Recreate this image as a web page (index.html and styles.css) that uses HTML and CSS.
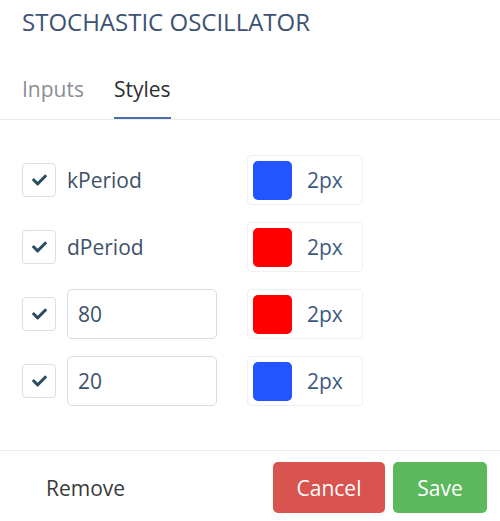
FILE: index.html
```html
<!DOCTYPE html>
<html>
<head>
<meta charset="utf-8">
<link rel="stylesheet" href="styles.css">
</head>
<body>
<div class="dialog">
  <h1 class="title">STOCHASTIC OSCILLATOR</h1>
  <div class="tabs">
    <div class="tab">Inputs</div>
    <div class="tab active">Styles</div>
  </div>
  <div class="rows">
    <div class="row">
      <div class="left">
        <span class="check"><svg viewBox="0 60 512 390" width="15" height="12"><path d="M173.898 439.404l-166.4-166.4c-9.997-9.997-9.997-26.206 0-36.204l36.203-36.204c9.997-9.998 26.207-9.998 36.204 0L192 312.69 432.095 72.596c9.997-9.997 26.207-9.997 36.204 0l36.203 36.204c9.997 9.997 9.997 26.206 0 36.204l-294.4 294.401c-9.998 9.997-26.207 9.997-36.204-.001z"/></svg></span>
        <span class="label">kPeriod</span>
      </div>
      <div class="style"><span class="swatch blue"></span><span class="px">2px</span></div>
    </div>
    <div class="row">
      <div class="left">
        <span class="check"><svg viewBox="0 60 512 390" width="15" height="12"><path d="M173.898 439.404l-166.4-166.4c-9.997-9.997-9.997-26.206 0-36.204l36.203-36.204c9.997-9.998 26.207-9.998 36.204 0L192 312.69 432.095 72.596c9.997-9.997 26.207-9.997 36.204 0l36.203 36.204c9.997 9.997 9.997 26.206 0 36.204l-294.4 294.401c-9.998 9.997-26.207 9.997-36.204-.001z"/></svg></span>
        <span class="label">dPeriod</span>
      </div>
      <div class="style"><span class="swatch red"></span><span class="px">2px</span></div>
    </div>
    <div class="row">
      <div class="left">
        <span class="check"><svg viewBox="0 60 512 390" width="15" height="12"><path d="M173.898 439.404l-166.4-166.4c-9.997-9.997-9.997-26.206 0-36.204l36.203-36.204c9.997-9.998 26.207-9.998 36.204 0L192 312.69 432.095 72.596c9.997-9.997 26.207-9.997 36.204 0l36.203 36.204c9.997 9.997 9.997 26.206 0 36.204l-294.4 294.401c-9.998 9.997-26.207 9.997-36.204-.001z"/></svg></span>
        <span class="input">80</span>
      </div>
      <div class="style"><span class="swatch red"></span><span class="px">2px</span></div>
    </div>
    <div class="row">
      <div class="left">
        <span class="check"><svg viewBox="0 60 512 390" width="15" height="12"><path d="M173.898 439.404l-166.4-166.4c-9.997-9.997-9.997-26.206 0-36.204l36.203-36.204c9.997-9.998 26.207-9.998 36.204 0L192 312.69 432.095 72.596c9.997-9.997 26.207-9.997 36.204 0l36.203 36.204c9.997 9.997 9.997 26.206 0 36.204l-294.4 294.401c-9.998 9.997-26.207 9.997-36.204-.001z"/></svg></span>
        <span class="input">20</span>
      </div>
      <div class="style"><span class="swatch blue"></span><span class="px">2px</span></div>
    </div>
  </div>
  <div class="footer">
    <span class="remove">Remove</span>
    <div class="buttons">
      <span class="btn cancel">Cancel</span>
      <span class="btn save">Save</span>
    </div>
  </div>
</div>
</body>
</html>
```
FILE: styles.css
```css
* { box-sizing: border-box; }
body {
  margin: 0;
  background: #fff;
  font-family: "Open Sans", "Noto Sans", sans-serif;
  width: 500px;
}
.title {
  margin: 0;
  padding: 6px 22px 0;
  font-size: 24px;
  font-weight: 400;
  line-height: 32px;
  color: #3d5272;
}
.tabs {
  display: flex;
  gap: 30px;
  padding: 37px 22px 0;
  border-bottom: 1px solid #e8ecf0;
}
.tab {
  font-size: 21px;
  line-height: 28px;
  color: #8a8f95;
  padding-bottom: 14px;
  border-bottom: 2px solid transparent;
}
.tab.active {
  color: #2f2f2f;
  border-bottom-color: #4c6ea6;
}
.rows {
  display: flex;
  flex-direction: column;
  gap: 17px;
  padding: 35px 0 0 22px;
  height: 330px;
}
.row {
  display: flex;
  align-items: center;
  height: 50px;
}
.left {
  display: flex;
  align-items: center;
  gap: 11px;
  width: 225px;
}
.check {
  width: 34px;
  height: 34px;
  border: 1px solid #dcdfe3;
  border-radius: 4px;
  display: flex;
  align-items: center;
  justify-content: center;
}
.check svg { fill: #2b4b62; }
.label {
  font-size: 21px;
  color: #3e5168;
}
.input {
  width: 150px;
  height: 50px;
  border: 1px solid #d8dbdf;
  border-radius: 5px;
  font-size: 21px;
  color: #3e5168;
  display: flex;
  align-items: center;
  padding-left: 10px;
}
.style {
  width: 116px;
  height: 50px;
  border: 1px solid #eef0f2;
  border-radius: 4px;
  display: flex;
  align-items: center;
  padding-left: 5px;
  gap: 15px;
}
.swatch {
  width: 39px;
  height: 39px;
  border-radius: 5px;
}
.swatch.blue { background: #2255ff; }
.swatch.red { background: #ff0000; }
.px {
  font-size: 21px;
  color: #3e5a80;
}
.footer {
  border-top: 1px solid #e8eef4;
  display: flex;
  align-items: center;
  justify-content: space-between;
  padding: 11px 13px 8px 46px;
}
.remove {
  font-size: 21px;
  color: #3a3a3a;
}
.buttons {
  display: flex;
  gap: 8px;
}
.btn {
  height: 51px;
  border-radius: 5px;
  color: #fff;
  font-size: 21px;
  display: flex;
  align-items: center;
  justify-content: center;
}
.cancel { width: 112px; background: #d9534f; }
.save { width: 94px; background: #5cb85c; }
```
